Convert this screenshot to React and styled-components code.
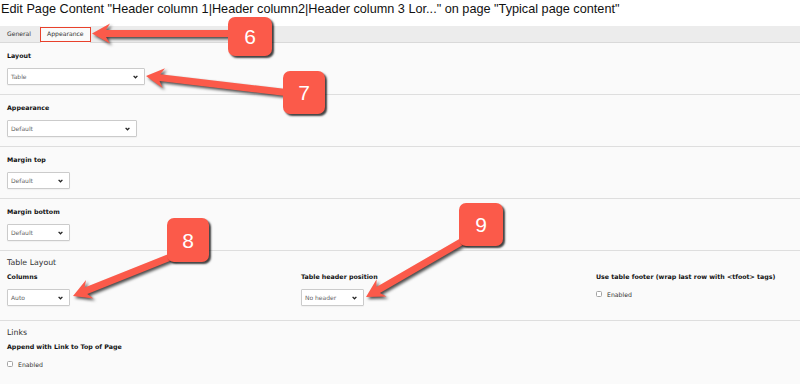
import React from 'react'
import styled, { createGlobalStyle } from 'styled-components'

const GlobalStyle = createGlobalStyle`
  html, body { margin: 0; padding: 0; background: #fff; }
  body { font-family: "DejaVu Sans", Verdana, sans-serif; }
`

const Page = styled.div`
  position: relative;
  width: 800px;
  height: 384px;
  overflow: hidden;
  background: #fafafa;
`

const Title = styled.h1`
  margin: 0;
  height: 26px;
  box-sizing: border-box;
  padding: 1px 0 0 1px;
  background: #fff;
  font: 400 12.7px/16px "Liberation Sans", Arial, sans-serif;
  color: #111;
  white-space: nowrap;
`

const TabBar = styled.div`
  display: flex;
  gap: 5px;
  height: 16px;
  padding-left: 2px;
  background: #ececec;
  border-bottom: 1px solid #d9d9d9;
`

const Tab = styled.div`
  position: relative;
  height: ${p => (p.$active ? '17px' : '16px')};
  padding: 0 ${p => (p.$active ? '6px' : '5px')};
  background: ${p => (p.$active ? '#fafafa' : 'transparent')};
  font-size: 6.1px;
  line-height: 16px;
  color: #333;

  ${p => p.$marked && `
    &::after {
      content: '';
      position: absolute;
      inset: 1px -1px 1px -1px;
      border: 1.5px solid #e8412c;
    }
  `}
`

const Section = styled.section`
  padding: ${p => p.$pt ?? 8}px 7px ${p => p.$pb ?? 9}px;
  border-bottom: 1px solid #dedede;
`

const GroupTitle = styled.div`
  font-size: 7.8px;
  line-height: 12px;
  color: #333;
  margin-bottom: 3px;
`

const Label = styled.div`
  font-size: 6.3px;
  font-weight: 700;
  line-height: 10px;
  color: #111;
  margin-bottom: ${p => p.$mb ?? 7}px;
  white-space: nowrap;
`

const Select = styled.div`
  display: flex;
  align-items: center;
  justify-content: space-between;
  box-sizing: border-box;
  width: ${p => p.$w}px;
  height: 17px;
  padding: 0 6px 0 3px;
  background: #fff;
  border: 1px solid #cbcbcb;
  border-radius: 1px;
  box-shadow: 0 1px 1px rgba(0, 0, 0, 0.04);
  font-size: 6px;
  color: #666;
`

const Grid = styled.div`
  display: grid;
  grid-template-columns: 294px 295px 1fr;
`

const CheckRow = styled.label`
  display: flex;
  align-items: center;
  gap: 5px;
  height: 10px;
  margin-top: ${p => p.$mt ?? 0}px;
  font-size: 6.2px;
  color: #333;
`

const Box = styled.span`
  width: 6px;
  height: 6px;
  box-sizing: border-box;
  border: 1px solid #a4a4a4;
  border-radius: 1.5px;
  background: #fff;
`

const Overlay = styled.svg`
  position: absolute;
  left: 0;
  top: 0;
  pointer-events: none;
  filter: drop-shadow(2px 2px 1.5px rgba(0, 0, 0, 0.7));
`

const Badge = styled.div`
  position: absolute;
  left: ${p => p.$x}px;
  top: ${p => p.$y}px;
  width: ${p => p.$w}px;
  height: ${p => p.$h}px;
  display: flex;
  align-items: center;
  justify-content: center;
  background: #fb5a4a;
  border-radius: 7px;
  box-shadow: 2px 2px 2px rgba(0, 0, 0, 0.75);
  font: 400 21px/1 "Liberation Sans", Arial, sans-serif;
  color: #fff;
`

const Chevron = () => (
  <svg width="5" height="4" viewBox="0 0 5 4">
    <path d="M0.6 0.9 L2.5 2.8 L4.4 0.9" fill="none" stroke="#222" strokeWidth="1.3" />
  </svg>
)

const Dropdown = ({ w, children }) => (
  <Select $w={w}>
    <span>{children}</span>
    <Chevron />
  </Select>
)

function arrowPoints([x1, y1], [x2, y2], shaft = 7, headW = 20, headL = 18) {
  const dx = x2 - x1
  const dy = y2 - y1
  const len = Math.hypot(dx, dy)
  const ux = dx / len
  const uy = dy / len
  const at = (d, o) => [x1 + ux * d - uy * o, y1 + uy * d + ux * o]
  const b = len - headL
  return [
    at(0, -shaft / 2), at(b + 4, -shaft / 2), at(b, -headW / 2), at(len, 0),
    at(b, headW / 2), at(b + 4, shaft / 2), at(0, shaft / 2),
  ].map(p => p.map(v => v.toFixed(1)).join(',')).join(' ')
}

const arrows = [
  [[236, 33.5], [92, 33.5]],
  [[290, 93], [146, 76]],
  [[178, 254], [73, 296]],
  [[468, 238], [366, 297]],
]

const badges = [
  { n: 6, x: 228, y: 17, w: 44, h: 39 },
  { n: 7, x: 283, y: 71, w: 42, h: 43 },
  { n: 8, x: 167, y: 218, w: 42, h: 44 },
  { n: 9, x: 459, y: 203, w: 44, h: 43 },
]

export default function App() {
  return (
    <>
      <GlobalStyle />
      <Page>
        <Title>Edit Page Content "Header column 1|Header column2|Header column 3 Lor..." on page "Typical page content"</Title>
        <TabBar>
          <Tab>General</Tab>
          <Tab $active $marked>Appearance</Tab>
        </TabBar>

        <Section>
          <Label>Layout</Label>
          <Dropdown w={138}>Table</Dropdown>
        </Section>
        <Section>
          <Label>Appearance</Label>
          <Dropdown w={130}>Default</Dropdown>
        </Section>
        <Section>
          <Label>Margin top</Label>
          <Dropdown w={63}>Default</Dropdown>
        </Section>
        <Section>
          <Label>Margin bottom</Label>
          <Dropdown w={63}>Default</Dropdown>
        </Section>

        <Section $pt={6} $pb={14}>
          <GroupTitle>Table Layout</GroupTitle>
          <Grid>
            <div>
              <Label>Columns</Label>
              <Dropdown w={63}>Auto</Dropdown>
            </div>
            <div>
              <Label>Table header position</Label>
              <Dropdown w={63}>No header</Dropdown>
            </div>
            <div>
              <Label $mb={0}>Use table footer (wrap last row with &lt;tfoot&gt; tags)</Label>
              <CheckRow $mt={7}><Box />Enabled</CheckRow>
            </div>
          </Grid>
        </Section>

        <Section $pt={6} $pb={15}>
          <GroupTitle>Links</GroupTitle>
          <Label $mb={0}>Append with Link to Top of Page</Label>
          <CheckRow $mt={7}><Box />Enabled</CheckRow>
        </Section>

        <Overlay width="800" height="384" viewBox="0 0 800 384">
          {arrows.map(([a, b], i) => (
            <polygon key={i} points={arrowPoints(a, b)} fill="#fb5a4a" />
          ))}
        </Overlay>
        {badges.map(b => (
          <Badge key={b.n} $x={b.x} $y={b.y} $w={b.w} $h={b.h}>{b.n}</Badge>
        ))}
      </Page>
    </>
  )
}
